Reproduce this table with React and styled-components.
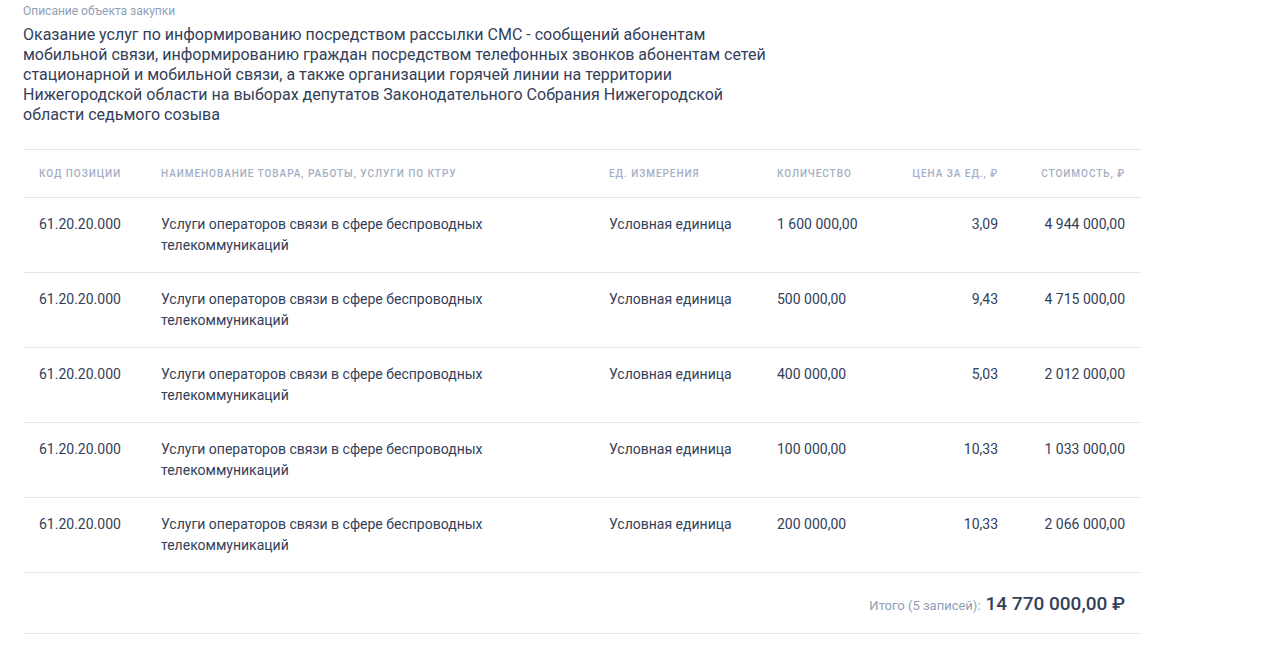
import React from "react";
import styled, { createGlobalStyle } from "styled-components";

const GlobalStyle = createGlobalStyle`
  html, body {
    margin: 0;
    padding: 0;
    background: #fff;
  }
  body {
    font-family: Roboto, "Noto Sans", sans-serif;
    color: #334059;
  }
`;

const Page = styled.div`
  padding: 3px 131px 0 23px;
`;

const Label = styled.div`
  font-size: 12px;
  line-height: 16px;
  color: #909eb5;
`;

const Description = styled.div`
  margin-top: 6px;
  width: 750px;
  font-size: 16px;
  line-height: 20px;
  color: #334059;
`;

const Table = styled.table`
  margin-top: 24px;
  width: 1118px;
  border-collapse: collapse;
  table-layout: fixed;
`;

const Th = styled.th`
  padding: 16px;
  font-size: 10px;
  line-height: 15px;
  font-weight: 500;
  letter-spacing: 0.95px;
  text-transform: uppercase;
  color: #a4aec4;
  text-align: ${(p) => (p.$right ? "right" : "left")};
  border-top: 1px solid #e4e4f0;
  border-bottom: 1px solid #e4e4f0;
  white-space: nowrap;
`;

const Td = styled.td`
  padding: 16px;
  font-size: 14px;
  line-height: 21px;
  color: #334059;
  vertical-align: top;
  text-align: ${(p) => (p.$right ? "right" : "left")};
  border-bottom: 1px solid #e4e4f0;
`;

const TotalCell = styled.td`
  height: 60px;
  padding: 0 16px;
  text-align: right;
  vertical-align: middle;
  border-bottom: 1px solid #e4e4f0;
`;

const TotalLabel = styled.span`
  font-size: 13px;
  color: #909eb5;
`;

const TotalSum = styled.span`
  font-size: 19px;
  font-weight: 500;
  color: #334059;
  margin-left: 5px;
`;

const rows = [
  { qty: "1 600 000,00", price: "3,09", cost: "4 944 000,00" },
  { qty: "500 000,00", price: "9,43", cost: "4 715 000,00" },
  { qty: "400 000,00", price: "5,03", cost: "2 012 000,00" },
  { qty: "100 000,00", price: "10,33", cost: "1 033 000,00" },
  { qty: "200 000,00", price: "10,33", cost: "2 066 000,00" },
];

export default function App() {
  return (
    <Page>
      <GlobalStyle />
      <Label>Описание объекта закупки</Label>
      <Description>
        Оказание услуг по информированию посредством рассылки СМС - сообщений
        абонентам мобильной связи, информированию граждан посредством
        телефонных звонков абонентам сетей стационарной и мобильной связи, а
        также организации горячей линии на территории Нижегородской области на
        выборах депутатов Законодательного Собрания Нижегородской области
        седьмого созыва
      </Description>
      <Table>
        <colgroup>
          <col style={{ width: 122 }} />
          <col style={{ width: 448 }} />
          <col style={{ width: 168 }} />
          <col style={{ width: 122 }} />
          <col style={{ width: 131 }} />
          <col style={{ width: 127 }} />
        </colgroup>
        <thead>
          <tr>
            <Th>Код позиции</Th>
            <Th>Наименование товара, работы, услуги по КТРУ</Th>
            <Th>Ед. измерения</Th>
            <Th>Количество</Th>
            <Th $right>Цена за ед., ₽</Th>
            <Th $right>Стоимость, ₽</Th>
          </tr>
        </thead>
        <tbody>
          {rows.map((r, i) => (
            <tr key={i}>
              <Td>61.20.20.000</Td>
              <Td>
                Услуги операторов связи в сфере беспроводных
                <br />
                телекоммуникаций
              </Td>
              <Td>Условная единица</Td>
              <Td>{r.qty}</Td>
              <Td $right>{r.price}</Td>
              <Td $right>{r.cost}</Td>
            </tr>
          ))}
          <tr>
            <TotalCell colSpan={6}>
              <TotalLabel>Итого (5 записей):</TotalLabel>
              <TotalSum>14 770 000,00 ₽</TotalSum>
            </TotalCell>
          </tr>
        </tbody>
      </Table>
    </Page>
  );
}
